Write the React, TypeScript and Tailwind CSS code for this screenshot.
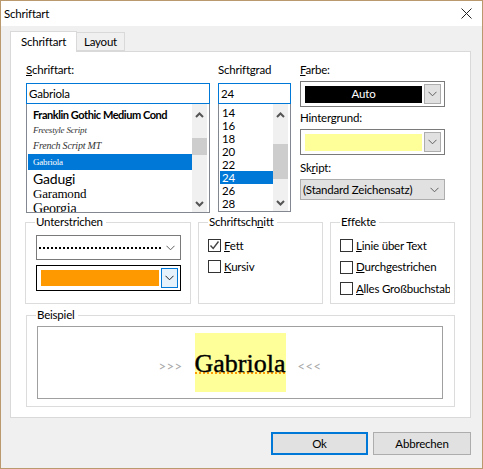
const Chev = ({ c = "#606060", w = 9 }: { c?: string; w?: number }) => (
  <svg width={w} height="6" viewBox="0 0 9 6" fill="none" className="shrink-0">
    <path d="M0.5 0.8 L4.5 4.8 L8.5 0.8" stroke={c} strokeWidth="1" />
  </svg>
);

const ScrollBar = ({ thumbTop, thumbH }: { thumbTop: number; thumbH: number }) => (
  <div className="w-[15px] shrink-0 bg-[#f0f0f0] flex flex-col items-center">
    <div className="h-[15px] mt-[3px] flex items-center">
      <svg width="9" height="6" viewBox="0 0 9 6" fill="none"><path d="M1 5 L4.5 1.5 L8 5" stroke="#555" strokeWidth="2" /></svg>
    </div>
    <div className="w-full bg-[#cdcdcd] shrink-0" style={{ marginTop: thumbTop, height: thumbH }} />
    <div className="mt-auto h-[15px] mb-[1px] flex items-center">
      <svg width="9" height="6" viewBox="0 0 9 6" fill="none"><path d="M1 1 L4.5 4.5 L8 1" stroke="#555" strokeWidth="2" /></svg>
    </div>
  </div>
);

const Check = ({ u, rest, on, clip }: { u: string; rest: string; on?: boolean; clip?: boolean }) => (
  <div className="flex items-center h-[13px] whitespace-nowrap">
    <div className="w-[13px] h-[13px] border border-[#333] bg-white shrink-0 flex items-center justify-center">
      {on && (
        <svg width="11" height="11" viewBox="0 0 11 11" fill="none"><path d="M1.5 5.5 L4.2 8.5 L9.5 1.5" stroke="#444" strokeWidth="1.4" /></svg>
      )}
    </div>
    <span className={clip ? "ml-[3px] w-[94px] overflow-hidden" : "ml-[3px]"}>
      <span className="underline">{u}</span>{rest}
    </span>
  </div>
);

const Group = ({ title, className, children }: { title: React.ReactNode; className: string; children: React.ReactNode }) => (
  <fieldset className={"border border-[#dcdcdc] min-w-0 " + className}>
    <legend className="ml-[9px] px-[1px] pr-[3px] h-4 leading-4 bg-white">{title}</legend>
    {children}
  </fieldset>
);

const ColorCombo = ({ color, children }: { color: string; children?: React.ReactNode }) => (
  <div className="w-[145px] h-[26px] border border-[#7a7a7a] bg-white flex items-center pl-[4px] pr-[3px]">
    <div className="w-[118px] h-[17px] flex items-center justify-center text-white" style={{ background: color }}>{children}</div>
    <div className="ml-[2px] w-[17px] h-[20px] bg-[#e1e1e1] border border-[#adadad] flex items-center justify-center">
      <Chev />
    </div>
  </div>
);

export default function App() {
  return (
    <div
      className="w-[483px] h-[469px] border border-[#b9996d] bg-[#f0f0f0] flex flex-col text-[11.5px] tracking-[-0.2px] leading-4 text-black overflow-hidden"
      style={{ fontFamily: 'Lato, "Noto Sans", sans-serif' }}
    >
      {/* title bar */}
      <div className="h-[25px] bg-white flex items-center justify-between pl-[3px] pr-[10px] shrink-0">
        <span>Schriftart</span>
        <svg width="11" height="11" viewBox="0 0 11 11" fill="none"><path d="M0.5 0.5 L10.5 10.5 M10.5 0.5 L0.5 10.5" stroke="#222" strokeWidth="1" /></svg>
      </div>

      {/* tabs */}
      <div className="pl-[9px] flex items-end h-[25px] shrink-0 relative z-10 pt-[5px]">
        <div className="w-[67px] h-[21px] -mb-[1px] bg-white border border-b-0 border-[#d9d9d9] flex items-center justify-center">Schriftart</div>
        <div className="w-[48px] h-[19px] bg-[#f0f0f0] border border-l-0 border-[#d9d9d9] flex items-center justify-center">Layout</div>
      </div>

      {/* panel */}
      <div className="ml-[9px] w-[461px] h-[367px] bg-white border border-[#d9d9d9] pl-[15px] pt-[10px] shrink-0">
        <div className="flex h-[152px]">
          {/* font list */}
          <div className="w-[184px] flex flex-col shrink-0">
            <div className="h-[21px] leading-4"><span className="underline">S</span>chriftart:</div>
            <div className="h-[21px] border border-[#0078d7] flex items-center pl-[2px]">Gabriola</div>
            <div className="h-[109px] border border-[#828790] border-t-0 flex overflow-hidden pl-[1px] pr-[2px]">
              <div className="flex-1 min-w-0 whitespace-nowrap overflow-hidden">
                <div className="h-[17px] mt-[2px] pl-[5px] font-bold leading-[17px] tracking-[-0.45px] text-[11px]">Franklin Gothic Medium Cond</div>
                <div className="h-[15px] pl-[5px] text-[9px] italic leading-[15px] text-[#333]" style={{ fontFamily: '"Liberation Serif", serif' }}>Freestyle Script</div>
                <div className="h-[16px] pl-[5px] text-[10px] italic leading-[16px] text-[#333]" style={{ fontFamily: '"Liberation Serif", serif' }}>French Script MT</div>
                <div className="h-[16px] pl-[5px] text-[9px] leading-[16px] bg-[#0078d7] text-white" style={{ fontFamily: '"Liberation Serif", serif' }}>Gabriola</div>
                <div className="h-[16px] pl-[5px] text-[14px] leading-[18px]">Gadugi</div>
                <div className="h-[15px] pl-[5px] text-[13px] leading-[15px]" style={{ fontFamily: '"Liberation Serif", serif' }}>Garamond</div>
                <div className="h-[15px] pl-[5px] text-[14px] leading-[15px]" style={{ fontFamily: '"Liberation Serif", serif' }}>Georgia</div>
              </div>
              <ScrollBar thumbTop={16} thumbH={17} />
            </div>
          </div>

          {/* size list */}
          <div className="w-[73px] ml-[8px] flex flex-col shrink-0">
            <div className="h-[21px] whitespace-nowrap">Schrift<span className="underline">g</span>rad</div>
            <div className="h-[21px] border border-[#0078d7] flex items-center pl-[2px]">24</div>
            <div className="h-[108px] border border-[#828790] border-t-0 flex overflow-hidden pl-[1px] pr-[2px]">
              <div className="flex-1 min-w-0 pt-[2px]">
                {["14", "16", "18", "20", "22", "24", "26", "28"].map((s) => (
                  <div key={s} className={"h-[13px] leading-[13px] pl-[2px] " + (s === "24" ? "bg-[#0078d7] text-white" : "")}>{s}</div>
                ))}
              </div>
              <ScrollBar thumbTop={22} thumbH={35} />
            </div>
          </div>

          {/* right col */}
          <div className="w-[145px] ml-[9px] flex flex-col shrink-0">
            <div className="h-[19px]"><span className="underline">F</span>arbe:</div>
            <ColorCombo color="#000">Auto</ColorCombo>
            <div className="h-[16px] mt-[3px] mb-[3px]">Hinter<span className="underline">g</span>rund:</div>
            <ColorCombo color="#ffff99" />
            <div className="h-[16px] mt-[5px] mb-[3px]">Sk<span className="underline">r</span>ipt:</div>
            <div className="h-[21px] bg-[#e1e1e1] border border-[#adadad] flex items-center justify-between pl-[2px] pr-[5px] whitespace-nowrap">
              <span>(Standard Zeichensatz)</span>
              <Chev />
            </div>
          </div>
        </div>

        {/* group boxes */}
        <div className="flex gap-[7px] -ml-[1px]">
          <Group title="Unterstrichen" className="w-[166px] h-[90px]">
            <div className="pl-[10px]">
              <div className="w-[145px] h-[25px] mt-[5px] border border-[#7a7a7a] flex items-center pl-[2px] pr-[5px] justify-between">
                <div className="w-[122px] border-t-2 border-dotted border-black" />
                <Chev />
              </div>
              <div className="w-[145px] h-[26px] mt-[5px] border border-black flex items-center pl-[4px] pr-[2px]">
                <div className="w-[118px] h-[16px] bg-[#ff9900]" />
                <div className="ml-[2px] w-[17px] h-[20px] bg-[#e5f1fb] border border-[#0078d7] flex items-center justify-center">
                  <Chev c="#222" />
                </div>
              </div>
            </div>
          </Group>
          <Group title={<>Schriftsch<span className="underline">n</span>itt</>} className="w-[125px] h-[90px]">
            <div className="flex flex-col gap-[8px] mt-[9px] pl-[9px]">
              <Check u="F" rest="ett" on />
              <Check u="K" rest="ursiv" />
            </div>
          </Group>
          <Group title="Effekte" className="w-[125px] h-[90px]">
            <div className="flex flex-col gap-[8.5px] mt-[9px] pl-[9px]">
              <Check u="L" rest="inie über Text" />
              <Check u="D" rest="urchgestrichen" />
              <Check u="A" rest="lles Großbuchstaben" clip />
            </div>
          </Group>
        </div>

        {/* sample */}
        <Group title="Beispiel" className="w-[429px] h-[100px] mt-[3px]">
          <div className="pl-[10px]">
            <div className="w-[406px] h-[73px] mt-[3px] border border-[#a0a0a0] flex items-center justify-center text-[#a8a8a8]">
              <span className="tracking-[0.5px] text-[13px] mt-[6px]">&gt;&gt;&gt;</span>
              <div className="mx-[12px] w-[91px] h-[59px] bg-[#ffff99] flex items-start justify-center">
                <span
                  className="mt-[14px] h-[27px] text-[26px] tracking-normal leading-[33px] text-black [-webkit-text-stroke:0.4px_black] border-b-2 border-dotted border-[#ff9900] whitespace-nowrap"
                  style={{ fontFamily: '"Liberation Serif", serif' }}
                >
                  Gabriola
                </span>
              </div>
              <span className="tracking-[0.5px] text-[13px] mt-[6px]">&lt;&lt;&lt;</span>
            </div>
          </div>
        </Group>
      </div>

      {/* buttons */}
      <div className="flex justify-end gap-[5px] pr-[11px] mt-[14px]">
        <button className="w-[97px] h-[23px] border-2 border-[#0078d7] bg-[#e1e1e1]">Ok</button>
        <button className="w-[98px] h-[23px] border border-[#adadad] bg-[#e1e1e1]">Abbrechen</button>
      </div>
    </div>
  );
}
